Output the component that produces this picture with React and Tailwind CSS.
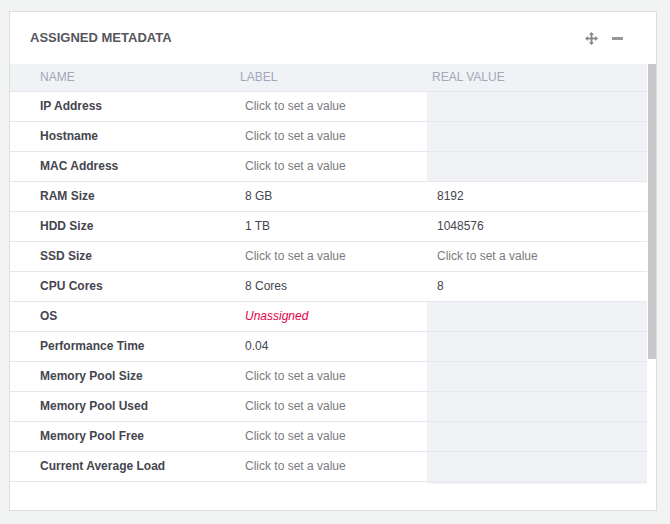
const rows = [
  ["IP Address", "set", null],
  ["Hostname", "set", null],
  ["MAC Address", "set", null],
  ["RAM Size", "8 GB", "8192"],
  ["HDD Size", "1 TB", "1048576"],
  ["SSD Size", "set", "set"],
  ["CPU Cores", "8 Cores", "8"],
  ["OS", "un", null],
  ["Performance Time", "0.04", null],
  ["Memory Pool Size", "set", null],
  ["Memory Pool Used", "set", null],
  ["Memory Pool Free", "set", null],
  ["Current Average Load", "set", null],
  ["", "", null],
];

function Value({ v }) {
  if (v === "set") return <span className="text-[#7a7a80]">Click to set a value</span>;
  if (v === "un") return <span className="italic text-[#e6004c]">Unassigned</span>;
  return <span className="text-[#45454f]">{v}</span>;
}

export default function App() {
  return (
    <div className="h-[524px] w-[670px] overflow-hidden bg-[#f2f3f3] pl-[9px] pt-[11px] font-['Liberation_Sans',Arial,sans-serif]">
      <div className="flex h-[500px] w-[648px] flex-col border border-[#dddddd] bg-white">
        <div className="flex h-[52px] shrink-0 items-center justify-between pl-5 pr-[33px]">
          <h3 className="text-[13px] font-bold text-[#56565e]">ASSIGNED METADATA</h3>
          <div className="flex items-center gap-[14px]">
            <svg width="13" height="13" viewBox="0 0 13 13" fill="#85858d">
              <rect x="5.6" y="1.5" width="1.8" height="10" />
              <rect x="1.5" y="5.6" width="10" height="1.8" />
              <path d="M6.5 0 L9 2.8 H4 Z" />
              <path d="M6.5 13 L9 10.2 H4 Z" />
              <path d="M0 6.5 L2.8 4 V9 Z" />
              <path d="M13 6.5 L10.2 4 V9 Z" />
            </svg>
            <div className="h-[3px] w-[11px] bg-[#97979c]" />
          </div>
        </div>
        <div className="flex h-[420px] shrink-0 overflow-hidden">
          <table className="h-fit w-[637px] shrink-0 table-fixed border-collapse text-[12px]">
            <colgroup>
              <col className="w-[225px]" />
              <col className="w-[192px]" />
              <col className="w-[220px]" />
            </colgroup>
            <thead>
              <tr className="h-[27.5px] border-b border-[#e7e8ee] bg-[#f1f2f6] text-left text-[#a2a7b8]">
                <th className="pb-[2px] pl-[30px] font-normal">NAME</th>
                <th className="pb-[2px] pl-[5px] font-normal">LABEL</th>
                <th className="pb-[2px] pl-[5px] font-normal">REAL VALUE</th>
              </tr>
            </thead>
            <tbody>
              {rows.map((r, i) => (
                <tr key={i} className="h-[30px] border-b border-[#e7e8ee]">
                  <td className="pb-[2px] pl-[30px] font-bold text-[#45454f]">{r[0]}</td>
                  <td className="pb-[2px] pl-[10px]"><Value v={r[1]} /></td>
                  <td className={r[2] === null ? "bg-[#f1f2f6]" : "pb-[2px] pl-[10px]"}>
                    {r[2] !== null && <Value v={r[2]} />}
                  </td>
                </tr>
              ))}
            </tbody>
          </table>
          <div className="ml-px w-[8px] shrink-0">
            <div className="h-[295px] bg-[#c8c8c8]" />
          </div>
        </div>
      </div>
    </div>
  );
}
